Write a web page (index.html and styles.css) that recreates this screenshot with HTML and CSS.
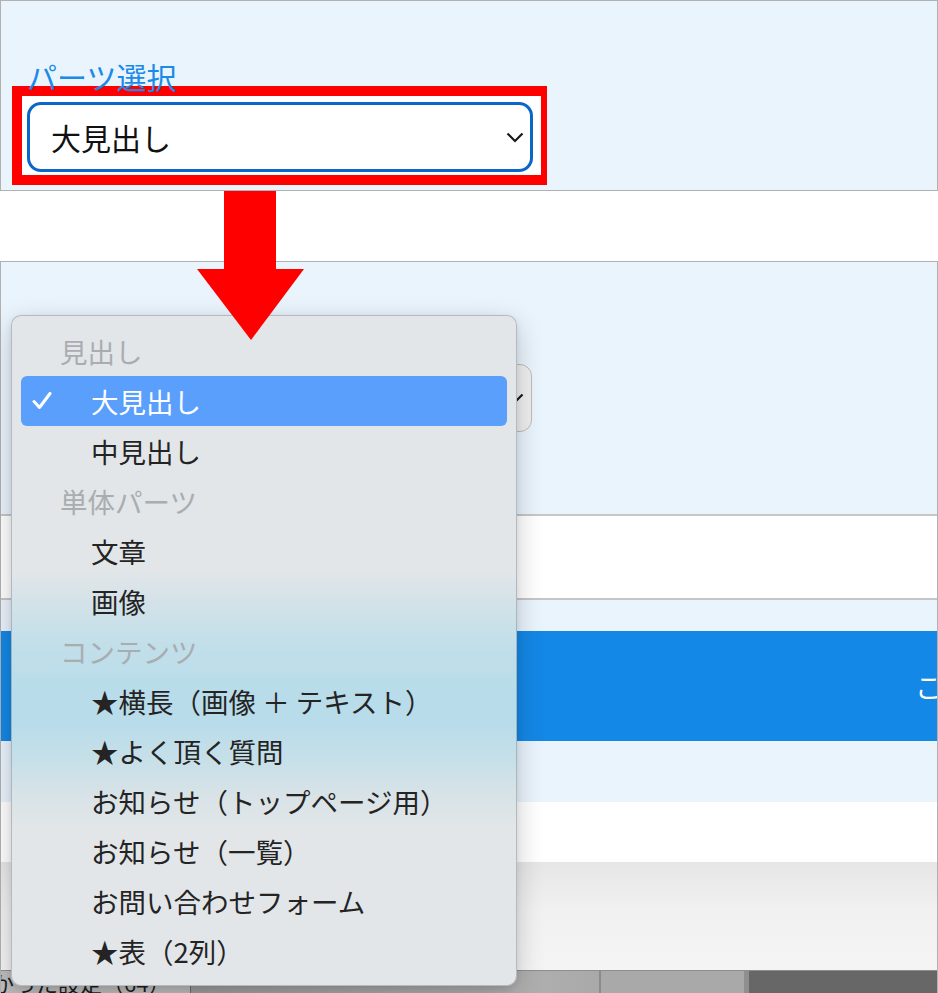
FILE: index.html
```html
<!DOCTYPE html>
<html lang="ja">
<head>
<meta charset="utf-8">
<title>パーツ選択</title>
<link rel="stylesheet" href="styles.css">
</head>
<body>
<div class="screen">
  <section class="panel-top">
    <div class="label">パーツ選択</div>
    <div class="pick">
      <div class="select">
        <span>大見出し</span>
        <svg class="chev" width="18" height="11" viewBox="0 0 18 11"><polyline points="1.5,1.5 9,9 16.5,1.5" fill="none" stroke="#1a1a1a" stroke-width="2.2"/></svg>
      </div>
    </div>
  </section>

  <div class="gap"></div>

  <section class="panel-bottom">
    <div class="form-area">
      <div class="select faded">
        <span></span>
        <svg class="chev" width="18" height="11" viewBox="0 0 18 11"><polyline points="1.5,1.5 9,9 16.5,1.5" fill="none" stroke="#1a1a1a" stroke-width="2.2"/></svg>
      </div>
    </div>
    <div class="rule"></div>
    <div class="white-row"></div>
    <div class="rule"></div>
    <div class="btn-area">
      <div class="blue-btn">この内容でパーツを追加する</div>
    </div>
    <div class="white-row2"></div>
    <div class="gray-area"></div>
    <div class="tabbar">
      <div class="seg seg1"><span>かった設定（64）</span></div>
      <div class="seg seg2"></div>
      <div class="seg seg3"></div>
      <div class="seg seg4"></div>
    </div>
  </section>

  <svg class="arrow" width="107" height="149" viewBox="0 0 107 149">
    <rect x="27" y="0" width="52" height="79" fill="#ff0000"/>
    <polygon points="0,78 107,78 54,149" fill="#ff0000"/>
  </svg>

  <div class="menu">
    <div class="row group">見出し</div>
    <div class="row selected">
      <svg class="check" width="20" height="18" viewBox="0 0 20 18"><polyline points="2,9.5 7.5,15.5 18,1.5" fill="none" stroke="#fff" stroke-width="3" stroke-linecap="round" stroke-linejoin="round"/></svg>
      <span class="txt">大見出し</span>
    </div>
    <div class="row">中見出し</div>
    <div class="row group">単体パーツ</div>
    <div class="row">文章</div>
    <div class="row">画像</div>
    <div class="row group">コンテンツ</div>
    <div class="row">★横長（画像 ＋ テキスト）</div>
    <div class="row">★よく頂く質問</div>
    <div class="row">お知らせ（トップページ用）</div>
    <div class="row">お知らせ（一覧）</div>
    <div class="row">お問い合わせフォーム</div>
    <div class="row">★表（2列）</div>
  </div>
</div>
</body>
</html>
```

FILE: styles.css
```css
* { box-sizing: border-box; }

body {
  margin: 0;
  background: #ffffff;
  font-family: "Noto Sans CJK JP", "Noto Sans", sans-serif;
}

.screen {
  position: relative;
  width: 938px;
  height: 993px;
  overflow: hidden;
}

/* top panel */
.panel-top {
  height: 191px;
  border: 1px solid #b1b1b1;
  background: #eaf4fd;
  padding: 63px 0 0 11px;
}

.label {
  font-size: 30px;
  line-height: 24px;
  color: #1b8ae8;
  padding-left: 15px;
}

.pick {
  width: 535px;
  height: 99px;
  margin-top: -2px;
  border-style: solid;
  border-color: #ff0000;
  border-width: 10px 6px 10px 10px;
  background: #ffffff;
  padding: 6px 8px 3px 5px;
}

.select {
  height: 70px;
  border: 3px solid #0b66c9;
  border-radius: 14px;
  background: #ffffff;
  display: flex;
  align-items: center;
  justify-content: space-between;
  padding: 0 6px 0 21px;
  font-size: 30px;
  color: #111111;
}

.chev { display: block; flex: none; }

.gap { height: 70px; }

/* lower panel */
.panel-bottom {
  border: 1px solid #b1b1b1;
  border-bottom: none;
}

.form-area {
  height: 252px;
  background: #eaf4fd;
  padding: 102px 0 0 26px;
}

.select.faded {
  width: 505px;
  height: 68px;
  border: 1.5px solid #bdbdbd;
  border-radius: 12px;
  background: #efefef;
  padding-right: 7px;
}

.rule { height: 2px; background: #c6c6c6; }

.white-row { height: 82px; background: #ffffff; }

.btn-area {
  background: #eaf4fd;
  padding: 31px 0 61px;
}

.blue-btn {
  height: 110px;
  background: #1488e6;
  color: #ffffff;
  font-size: 27px;
  display: flex;
  align-items: center;
  padding-left: 914px;
  white-space: nowrap;
  overflow: hidden;
}

.white-row2 { height: 60px; background: #ffffff; }

.gray-area {
  height: 108px;
  background: linear-gradient(#e6e6e6, #f1f1f1 45%, #f4f4f4);
}

.tabbar {
  height: 23px;
  border-top: 1px solid #8e8e8e;
  display: flex;
}

.seg { height: 100%; }

.seg1 {
  width: 190px;
  background: #bdbdbd;
  border-right: 1px solid #6f6f6f;
  overflow: hidden;
  font-size: 22px;
  line-height: 24px;
  color: #1e1e1e;
  white-space: nowrap;
}

.seg1 span { display: block; margin-left: -9px; margin-top: -1px; }

.seg2 {
  width: 410px;
  background: linear-gradient(90deg, #9d9d9d, #b0b0b0 80%, #a9a9a9);
  border-right: 2px solid #8a8a8a;
}

.seg3 {
  width: 148px;
  background: #a9a9a9;
  border-right: 5px solid #8f8f8f;
}

.seg4 {
  flex: 1;
  background: #676767;
}

/* overlay arrow */
.arrow {
  position: absolute;
  left: 197px;
  top: 191px;
  z-index: 3;
}

/* popup menu */
.menu {
  position: absolute;
  left: 11px;
  top: 315px;
  width: 506px;
  height: 671px;
  z-index: 2;
  border-radius: 10px;
  border: 1px solid rgba(110, 120, 130, 0.4);
  background: linear-gradient(180deg,
    #e3e6e9 0%,
    #e2e6e9 38%,
    #d3e2e8 43%,
    #c2dfe9 49%,
    #b8dcea 56%,
    #b9dcea 61%,
    #c8e0e8 67%,
    #d9e3e7 72%,
    #e2e6e9 77%,
    #e3e6e9 100%);
  box-shadow: 0 8px 28px rgba(0, 0, 0, 0.2), 0 2px 6px rgba(0, 0, 0, 0.08);
  padding: 10px 9px;
}

.row {
  position: relative;
  height: 50px;
  line-height: 50px;
  font-size: 27.5px;
  color: #242424;
  padding-left: 70px;
  border-radius: 6px;
  white-space: nowrap;
}

.row.group {
  color: #a9adb2;
  padding-left: 39px;
}

.row.selected {
  background: #5b9ffd;
  color: #ffffff;
}

.check {
  position: absolute;
  left: 11px;
  top: 16px;
}
```
